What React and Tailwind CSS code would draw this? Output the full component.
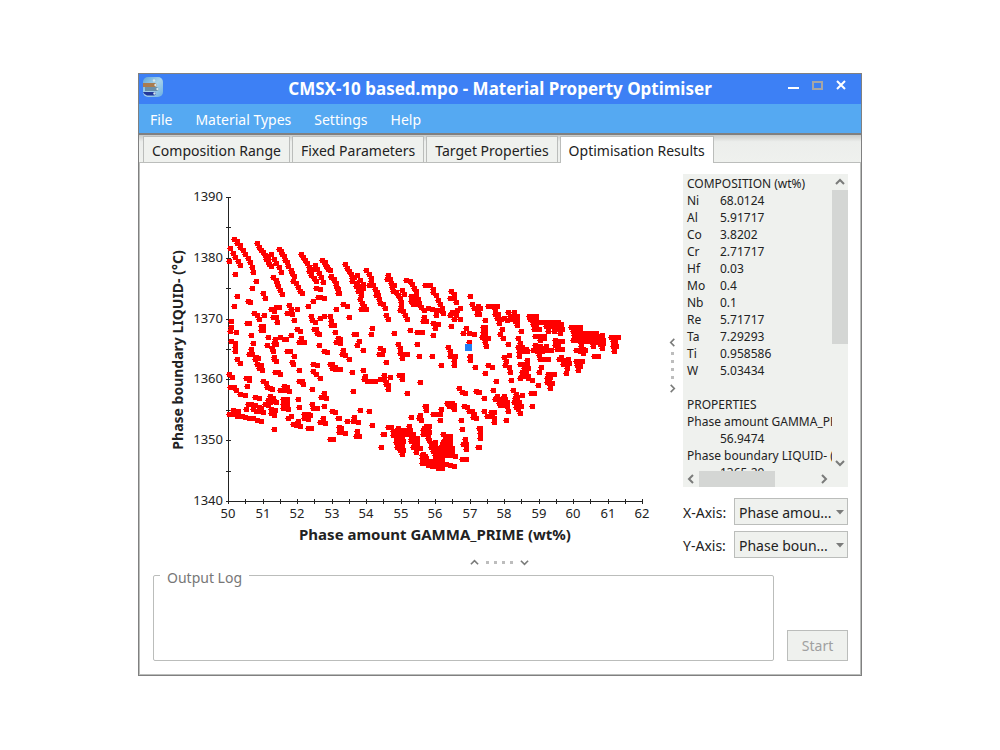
import React from "react";

// Marker centres grouped by plot region, stored in thirds of a pixel from each region's origin.
const REGIONS = [
  {
    x: 160,
    y: 180,
    points: `223,178 232,184 232,190 241,196 241,202 250,211 257,223 265,235 271,247 277,262 280,277
    211,205 220,220 226,232 235,244 241,256 208,244 226,283 232,349 223,379 289,304 277,325 310,340 316,355 265,364 271,367
    292,190 298,202 304,211 310,218 316,226 319,238 325,244 328,253 334,259 334,223 343,238 349,250 358,262 364,277 325,232
    358,208 364,214 367,223 373,229 376,241 382,247 385,259 394,271 397,280 403,290 400,304 409,310 415,322 421,334 427,340
    340,292 349,301 352,310 355,319 361,331 367,343
    424,223 430,232 436,241 442,250 448,262 454,271 454,286 463,295 469,304 466,256 472,268 478,280 484,292 490,307 460,268 448,274
    487,241 496,247 499,259 505,268 511,271 514,292 523,298 529,310 532,325 535,340
    469,325 481,328 475,352 481,352 493,355 460,364 445,379
    334,388 349,382 358,382 343,394 388,376 394,388 412,388 382,400 397,403 529,388
    283,400 292,406 313,406 298,418 340,412 349,412 352,427 403,421 454,409 457,421 466,427 481,415 493,409 511,409 514,424 523,436 514,436
    262,430 268,430 214,424 214,442 211,454 229,457 303,439 309,439 309,451 303,451 274,466 325,472 346,478 361,472 373,478 379,478 394,466
    412,448 421,454 424,475 418,487 433,487 463,448 472,460 478,463 469,448 526,457 535,475 529,487
    214,484 226,490 226,502 226,514 280,490 322,496 343,490 349,493 337,505 340,514 478,496 493,514 502,517
    274,508 268,523 277,523 289,532 295,535 382,514 391,514 403,529 343,532`,
  },
  {
    x: 160,
    y: 340,
    points: `232,58 241,70 287,58 295,55 292,73 304,76 298,85 307,91 343,58 349,64 397,67 401,73 418,91 460,73 472,76 517,73 511,73
    517,85 526,82 535,88 460,94 469,103 481,115 346,97 355,97 361,103 208,103 217,112 268,115 259,115 268,121 262,139 310,124
    319,130 322,142 337,148 331,145 418,124 427,124 430,133 211,142 223,142 229,151 457,148 373,139 382,142 361,151 373,151 388,154
    241,163 256,166 286,172 298,175 331,169 340,175 325,181 343,184 349,187 331,187 415,178 493,160 484,172 499,175
    316,193 325,195 371,178 383,178 371,193 383,193 371,205 385,208 418,202 457,193 460,205 472,205 493,199 265,193 274,193 286,196
    298,202 304,205 280,208 289,214 259,208 298,214 310,217 334,208 346,211 334,220 343,226 220,211 235,214 208,223 220,223 232,229
    247,229 256,232 268,235 280,235 292,241 304,244 517,214 526,217 433,223 445,223 433,235 445,238 451,226 394,229 385,235 490,235
    481,247 496,250 415,244 400,253 409,256 421,259 445,265 454,265 343,268 535,235 538,262 538,277 511,298 520,298`,
  },
  {
    x: 320,
    y: 230,
    points: `8,91 14,97 17,103 23,112 32,121 35,139 43,151 49,166 55,178 58,190 76,103 82,115 88,124 94,133 97,145 97,154 103,142 112,136 121,151 112,160 109,169 130,175 118,172 115,184
    124,196 121,208 127,220 133,229 124,238 139,238 124,184 130,163
    139,121 148,133 154,145 148,166 160,166 166,178 172,187 169,196 178,208 181,220 190,223 196,235 199,256 205,268 154,154 175,196
    205,136 211,148 202,148 214,160 217,172 220,184 229,187 235,196 247,181 253,193 241,205 244,217 244,229 241,241 250,244 256,256 262,268 223,166
    259,151 271,154 277,163 283,175 289,184 289,196 274,199 274,214 283,211 280,223 295,208 298,220 304,232 313,241 325,235 337,238 349,241 349,256 361,241 289,223
    316,166 331,166 340,178 340,187 349,196 355,211 361,223 367,235 370,250
    394,184 403,193 403,205 391,205 409,217 421,235 412,241 397,247 391,256 409,256 403,268 421,268 451,199 457,223 463,235 475,229 475,241 472,253
    70,223 82,229 49,238 88,262 157,295 154,313 223,310 271,301 292,307 307,307 313,262 310,274 319,274 340,280 355,283 346,295 340,316 394,289
    439,295 430,310 448,310 463,313 448,337
    55,325 61,328 52,337 61,340 103,313 109,313 118,334 112,346 130,361 70,361 67,373 76,376 88,387 181,355 190,361 187,373 178,373
    235,343 241,355 241,370 250,373 262,373 292,343 298,379 337,379 385,352 391,364 397,379 391,379 406,379 451,382`,
  },
  {
    x: 320,
    y: 340,
    points: `247,55 403,64 403,76 451,49 451,61 364,76 466,82 199,67 40,82 46,88 61,88 97,97 130,91 136,109 133,118 142,124 154,124 166,124 181,118
    193,106 193,118 211,112 199,127 205,136 199,133 205,148 238,106 247,106 247,118 301,127 100,154 262,160 418,145 427,157 436,160 469,154 475,157
    121,211 148,214 58,235 82,244 103,232 100,244 115,247 157,256 64,265 61,277 76,280 112,274 109,289 118,289 184,322 193,283 191,283
    274,232 301,226 298,235 304,241 319,199 319,211 316,199 340,223 352,223 364,208 361,223 361,241 382,190 397,190 388,199 403,196 403,208
    433,199 442,202 448,214 457,214 463,223 469,235 424,241 427,268 460,232
    205,262 214,262 235,265 220,274 220,286 229,292 235,271 247,271 232,298 244,298 238,310 247,316 232,322 241,331 247,343 241,283 229,307 250,331 235,283 247,292 250,304
    268,259 259,271 271,271 256,283 271,283 280,289 292,295 274,298 283,310 292,313 280,322 289,328 301,325 289,337 292,304 265,277 262,283 280,283 274,304 283,298
    319,259 310,271 325,271 310,283 325,286 328,301 334,310 346,307 334,322 346,322 340,334 352,331 361,325 370,283 385,289 376,298 391,301
    313,265 328,259 328,277 325,295 376,289 391,289 370,307 385,307 370,328 358,334 388,331 391,322 370,340 367,349 376,346 352,346 397,346
    376,310 391,313 367,316 382,325 397,325 379,337 397,337 388,346 406,349 361,340 346,346 358,352 307,346 316,349 352,361 343,364 367,370
    310,343 307,355 319,355 307,370 319,370 331,364 325,376 337,379 346,370 352,379 361,370 355,385 367,385 379,373 391,376 403,379 346,358 367,361
    337,370 313,361 349,376 367,379 343,376 361,379
    436,298 430,313 439,313 439,328 427,358 439,358 436,358 475,322`,
  },
  {
    x: 460,
    y: 270,
    points: `55,109 61,115 52,121 58,133 46,115 37,103 84,109 96,109 112,109 106,118 106,133 115,133 112,145 124,148 118,160 133,145 142,151 76,151
    127,178 121,193 130,205 184,184 145,223 146,127 163,127 151,139 163,139 172,139 172,151 166,154 172,166 157,148
    70,172 76,172 76,184 70,187 76,196 66,202 73,205 85,205 76,217 79,229
    209,139 218,139 229,139 211,148 217,151 229,151 220,163 223,178 229,166 238,178 229,157 241,157 256,157 271,157 286,157 295,157 259,169 271,169
    283,169 295,169 304,163 307,178 265,184 283,184 301,190 304,172 295,178
    226,199 238,199 253,199 241,211 253,205 175,205 181,220 175,232 187,232 178,247 190,244 199,238 203,244 178,259 226,226 241,229 259,229
    220,241 232,244 247,244 259,241 274,241 286,211 298,214 307,214 286,226 295,223 292,238 307,238 238,256 241,268 253,268 265,268 250,235 235,235
    334,172 349,172 361,172 340,184 352,184 361,184 343,196 340,211 349,199 355,211 370,190 382,190 397,190 409,190 370,202 385,205 400,205
    415,199 427,196 427,205 430,211 364,214 379,214 397,217 412,217 400,229 421,223 427,235 364,229 370,238 349,241 361,244 376,241 370,250 403,259 415,259
    376,196 391,196 403,196 415,211 388,214 430,220 385,211 355,193 361,205 409,205 364,220
    454,202 466,202 475,202 460,214 466,214 460,229 469,229 463,244 463,235 463,220
    148,256 133,262 139,274 136,286 148,292 151,307 154,331 109,334 76,310 85,286 97,292
    202,271 193,283 181,283 202,283 193,295 205,295 187,307 199,310 205,319 196,319 187,316 181,325 205,325 217,331 235,346 244,292 238,307 199,298
    304,262 298,268 313,271 325,268 310,283 328,280 322,295 319,310 349,274 358,274 367,274 352,286 361,289 355,301 319,280
    265,313 274,313 283,313 262,325 268,328 262,337 268,340 277,340 271,355 214,370 223,370 217,409 271,322
    160,361 169,373 187,376 166,385 172,385 163,397 178,397 169,412 184,409 175,418 181,430 172,403
    100,361 73,385 112,379 133,379 106,388 118,388 136,388 118,400 130,400 142,397 121,406 133,406 142,409 145,424 139,451 127,394
    73,424 94,427 103,427 82,439 97,439 103,445 102,457
    58,367 49,364 61,475 58,475 61,490 61,505 58,532`,
  },
];

const MARKERS = REGIONS.map(({ x, y, points }) =>
  points
    .trim()
    .split(/\s+/)
    .map((pair) => {
      const [px, py] = pair.split(",").map(Number);
      const left = x + Math.floor(px / 3) - 2;
      const top = y + Math.floor(py / 3) - 2;
      return `M${left} ${top}h5v5h-5v-2h-1v-1h1z`;
    })
    .join("")
).join("");

const X_TICKS = Array.from({ length: 25 }, (_, i) => 228 + Math.round(i * 17.25));
const Y_TICKS = Array.from({ length: 11 }, (_, i) => 501 - Math.round(i * 30.4));

const COMPOSITION = [
  ["Ni", "68.0124"],
  ["Al", "5.91717"],
  ["Co", "3.8202"],
  ["Cr", "2.71717"],
  ["Hf", "0.03"],
  ["Mo", "0.4"],
  ["Nb", "0.1"],
  ["Re", "5.71717"],
  ["Ta", "7.29293"],
  ["Ti", "0.958586"],
  ["W", "5.03434"],
];

function AppLogo() {
  return (
    <svg width="21" height="21" viewBox="0 0 21 21" aria-hidden="true">
      <defs>
        <linearGradient id="logo" x1="0" y1="0" x2="1" y2="1">
          <stop offset="0" stopColor="#5fa5d8" />
          <stop offset="0.5" stopColor="#a9d3ea" />
          <stop offset="1" stopColor="#6aaee2" />
        </linearGradient>
      </defs>
      <rect width="20" height="20" rx="5" fill="url(#logo)" />
      <path d="M0 6h12q2 1 2 2t-2 2H0z" fill="#a97c50" />
      <path d="M2 10h12q2 1 2 2t-2 2H2z" fill="#6b8fa8" />
      <path d="M0 15h11q2 0 2 1.500t-2 2H4q-3-1-4-3.500z" fill="#22389a" />
      <g fill="#d5e6ee">
        <circle cx="11" cy="3.500" r="1.200" />
        <circle cx="12.500" cy="8" r="1.200" />
        <circle cx="14.500" cy="12" r="1.200" />
        <circle cx="11.500" cy="16.500" r="1.200" />
      </g>
    </svg>
  );
}

function Chevron({ dir, small }) {
  const paths = {
    up: "M1 7l4-4 4 4",
    down: "M1 3l4 4 4-4",
    left: "M7 1L3 5l4 4",
    right: "M3 1l4 4-4 4",
  };
  return (
    <svg
      width={small ? 9 : 10}
      height={small ? 9 : 10}
      viewBox="0 0 10 10"
      fill="none"
      stroke="#7a7b7a"
      strokeWidth={small ? 1.8 : 2}
      aria-hidden="true"
    >
      <path d={paths[dir]} />
    </svg>
  );
}

function Dots() {
  return [0, 1, 2, 3].map((i) => <span key={i} className="size-[3px] bg-[#bdbdbd]" />);
}

function Tab({ children, active }) {
  return (
    <button
      role="tab"
      aria-selected={!!active}
      className={
        active
          ? "-mb-px h-[27px] border border-b-0 border-[#bbbdbb] bg-white px-2 pt-px whitespace-nowrap"
          : "h-[26px] border border-b-0 border-[#bbbdbb] bg-[#eff1ee] px-2 pt-[2px] whitespace-nowrap"
      }
    >
      {children}
    </button>
  );
}

function AxisSelect({ id, label, value }) {
  return (
    <div className="flex items-center justify-between">
      <label htmlFor={id} className="pt-[2px] whitespace-nowrap">
        {label}
      </label>
      <div className="relative h-[27px] w-[114px]">
        <select
          id={id}
          className="h-full w-full appearance-none border border-[#bbbdbb] bg-[#eff1ee] pt-[2px] pl-1 text-[#222]"
          defaultValue={value}
        >
          <option>{value}</option>
        </select>
        <svg
          className="pointer-events-none absolute top-[12px] right-[4px]"
          width="8"
          height="5"
          viewBox="0 0 8 5"
          aria-hidden="true"
        >
          <path d="M0 0h8L4 4.500z" fill="#7a7b7a" />
        </svg>
      </div>
    </div>
  );
}

function ScatterChart() {
  return (
    <svg
      className="block w-full"
      viewBox="140 163 524 395"
      role="img"
      aria-label="Phase boundary against phase amount"
      fontFamily='"Noto Sans", sans-serif'
      fill="#222"
    >
      <g stroke="#222" strokeWidth="1" shapeRendering="crispEdges">
        <path d="M228.500 197V502M228 501.500H643" />
        {X_TICKS.map((x) => (
          <path key={x} d={`M${x + 0.5} 499v5`} />
        ))}
        {Y_TICKS.map((y) => (
          <path key={y} d={`M226 ${y + 0.5}h5`} />
        ))}
      </g>
      <path d={MARKERS} fill="#ff0000" shapeRendering="crispEdges" />
      <rect x="465" y="344" width="7" height="7" fill="#1f7ff5" />
      <g fontSize="13" textAnchor="end">
        {[0, 1, 2, 3, 4, 5].map((i) => (
          <text key={i} x="223" y={Y_TICKS[i * 2] + 4}>
            {1340 + i * 10}
          </text>
        ))}
      </g>
      <g fontSize="13" textAnchor="middle">
        {Array.from({ length: 13 }, (_, i) => (
          <text key={i} x={X_TICKS[i * 2]} y="518">
            {50 + i}
          </text>
        ))}
      </g>
      <g fontWeight="700" textAnchor="middle">
        <text x="435" y="540" fontSize="15">
          Phase amount GAMMA_PRIME (wt%)
        </text>
        <text transform="translate(183 350) rotate(-90)" fontSize="14">
          Phase boundary LIQUID- (°C)
        </text>
      </g>
    </svg>
  );
}

function DetailsBox() {
  return (
    <section
      aria-label="Selected point"
      className="grid min-h-0 flex-1 grid-cols-[1fr_16px] grid-rows-[1fr_16px] bg-[#eff1ee] text-[12px] leading-[17px]"
    >
      <div className="min-h-0 overflow-hidden pt-px pl-1 whitespace-nowrap">
        <div className="h-0 min-h-full">
          <h2>COMPOSITION (wt%)</h2>
          <table>
            <tbody>
              {COMPOSITION.map(([name, value]) => (
                <tr key={name}>
                  <th scope="row" className="w-[33px] p-0 text-left font-normal">
                    {name}
                  </th>
                  <td className="p-0">{value}</td>
                </tr>
              ))}
            </tbody>
          </table>
          <h2 className="mt-[17px]">PROPERTIES</h2>
          <dl>
            <dt>Phase amount GAMMA_PRIME (wt%)</dt>
            <dd className="pl-[33px]">56.9474</dd>
            <dt>Phase boundary LIQUID- (°C)</dt>
            <dd className="pl-[33px]">1365.29</dd>
          </dl>
        </div>
      </div>
      <div className="flex flex-col items-center">
        <button aria-label="Scroll up" className="grid h-4 w-4 place-items-center">
          <Chevron dir="up" />
        </button>
        <div className="flex w-4 flex-1 flex-col">
          <div className="h-[58%] bg-[#d4d6d4]" />
        </div>
        <button aria-label="Scroll down" className="grid h-4 w-4 place-items-center">
          <Chevron dir="down" />
        </button>
      </div>
      <div className="flex">
        <button aria-label="Scroll left" className="grid h-4 w-4 place-items-center">
          <Chevron dir="left" />
        </button>
        <div className="flex flex-1">
          <div className="w-[65%] bg-[#d4d6d4]" />
        </div>
        <button aria-label="Scroll right" className="grid h-4 w-4 place-items-center">
          <Chevron dir="right" />
        </button>
      </div>
    </section>
  );
}

export default function App() {
  return (
    <div className='flex min-h-screen flex-col bg-white px-[138px] pt-[73px] pb-[74px] font-["Noto_Sans",sans-serif] text-[14px] text-[#222]'>
      <div className="flex flex-1 flex-col border border-[#808080]">
        <header className="flex h-[30px] items-center bg-[#3d80f5] text-white">
          <div className="flex w-20 pb-1 pl-1">
            <AppLogo />
          </div>
          <h1 className="flex-1 text-center text-[17px] font-bold whitespace-nowrap">
            CMSX-10 based.mpo - Material Property Optimiser
          </h1>
          <div className="flex w-20 items-center justify-end gap-[13px] pr-[15px] pb-2">
            <button aria-label="Minimise" className="pt-[6px]">
              <svg width="11" height="2" aria-hidden="true">
                <path d="M0 1h11" stroke="#fff" strokeWidth="2" />
              </svg>
            </button>
            <button aria-label="Maximise">
              <svg width="11" height="9" viewBox="0 0 11 9" aria-hidden="true">
                <path d="M1 1h9v7H1z" fill="none" stroke="#a6a6a6" strokeWidth="2" />
              </svg>
            </button>
            <button aria-label="Close">
              <svg width="10" height="10" viewBox="0 0 10 10" aria-hidden="true">
                <path d="M1 1l8 8M9 1L1 9" stroke="#fff" strokeWidth="2" />
              </svg>
            </button>
          </div>
        </header>
        <nav className="flex h-[31px] items-center gap-[23px] border-b-2 border-[#808080] bg-[#55a9f2] pt-[2px] pl-[11px] text-white">
          <button>File</button>
          <button>Material Types</button>
          <button>Settings</button>
          <button>Help</button>
        </nav>
        <div
          role="tablist"
          className="flex h-[28px] items-end gap-[2px] border-b border-[#bbbdbb] bg-linear-to-b from-[#c9cbc9] via-[#eceeec] via-25% to-[#eff1ee] pl-1"
        >
          <Tab>Composition Range</Tab>
          <Tab>Fixed Parameters</Tab>
          <Tab>Target Properties</Tab>
          <Tab active>Optimisation Results</Tab>
        </div>
        <main className="flex flex-1 flex-col border border-t-0 border-[#bbbdbb] pb-[13px]">
          <div className="flex min-h-0 flex-1 pr-3">
            <div className="min-w-0 flex-1">
              <ScatterChart />
            </div>
            <div className="flex w-[19px] flex-col items-center justify-center gap-[5px] pt-[10px] pr-[2px]">
              <button aria-label="Collapse left">
                <Chevron dir="left" small />
              </button>
              <Dots />
              <button aria-label="Collapse right">
                <Chevron dir="right" small />
              </button>
            </div>
            <aside className="flex w-[165px] flex-col pt-[11px]">
              <DetailsBox />
              <div className="mt-[11px] flex flex-col gap-[6px]">
                <AxisSelect id="x-axis" label="X-Axis:" value="Phase amou..." />
                <AxisSelect id="y-axis" label="Y-Axis:" value="Phase boun..." />
              </div>
            </aside>
          </div>
          <div className="flex h-[8px] items-center justify-center gap-[5px] pr-px">
            <button aria-label="Collapse up" className="mr-0.5">
              <Chevron dir="up" small />
            </button>
            <Dots />
            <button aria-label="Collapse down" className="ml-0.5">
              <Chevron dir="down" small />
            </button>
          </div>
          <div className="flex items-end gap-[13px] pr-3 pl-[13px]">
            <fieldset className="h-[95px] flex-1 rounded-[2px] border border-[#bbbdbb]">
              <legend className="ml-[6px] px-[7px] pt-1.5 leading-3 text-[#777]">
                <label htmlFor="log">Output Log</label>
              </legend>
              <textarea id="log" readOnly className="block h-[60px] w-full resize-none px-2 outline-none" />
            </fieldset>
            <button disabled className="h-[31px] w-[61px] border border-[#bbbdbb] bg-[#eff1ee] text-[#a0a0a0]">
              Start
            </button>
          </div>
        </main>
      </div>
    </div>
  );
}
